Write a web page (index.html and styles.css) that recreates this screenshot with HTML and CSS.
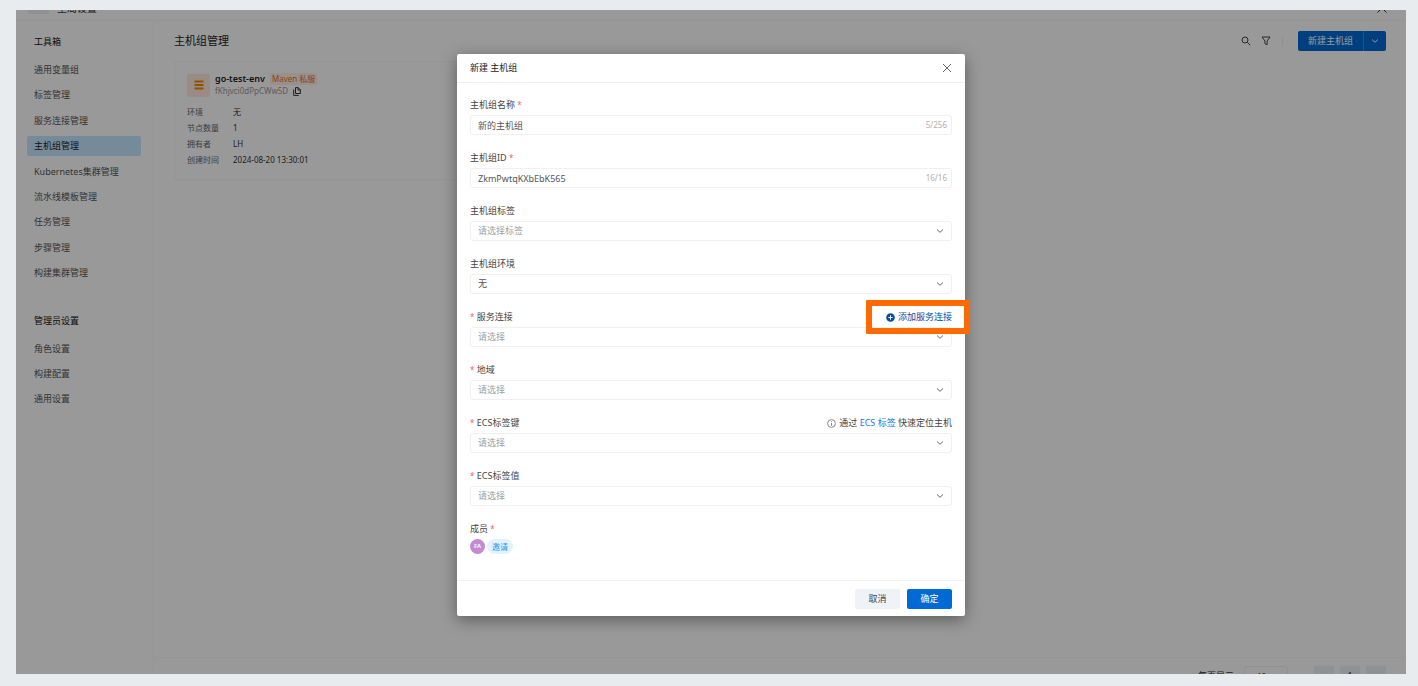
FILE: index.html
```html
<!DOCTYPE html>
<html lang="zh-CN">
<head>
<meta charset="utf-8">
<meta name="viewport" content="width=device-width, initial-scale=1">
<title>主机组管理</title>
<link rel="stylesheet" href="styles.css">
</head>
<body>
<div class="screen">
  <header class="topbar">
    <span class="brand-mark"></span>
    <span class="brand-name">全局设置</span>
    <button class="icon-btn topbar-close" aria-label="关闭设置"><svg width="12" height="12" viewBox="0 0 12 12"><path d="M1.5 1.5l9 9M10.5 1.5l-9 9"/></svg></button>
  </header>
  <div class="workspace">
    <nav class="sidebar">
      <h2 class="side-title">工具箱</h2>
      <ul class="side-list side-list-tools">
        <li><a href="#">通用变量组</a></li>
        <li><a href="#">标签管理</a></li>
        <li><a href="#">服务连接管理</a></li>
        <li><a href="#" class="active">主机组管理</a></li>
        <li><a href="#">Kubernetes集群管理</a></li>
        <li><a href="#">流水线模板管理</a></li>
        <li><a href="#">任务管理</a></li>
        <li><a href="#">步骤管理</a></li>
        <li><a href="#">构建集群管理</a></li>
      </ul>
      <h2 class="side-title side-title-admin">管理员设置</h2>
      <ul class="side-list">
        <li><a href="#">角色设置</a></li>
        <li><a href="#">构建配置</a></li>
        <li><a href="#">通用设置</a></li>
      </ul>
    </nav>
    <main class="main">
      <div class="page-head">
        <h1 class="page-title">主机组管理</h1>
        <div class="tools">
          <button class="icon-btn" aria-label="搜索"><svg width="10" height="10" viewBox="0 0 10 10"><circle cx="4" cy="4" r="3"/><path d="M6.3 6.3L9.3 9.3"/></svg></button>
          <button class="icon-btn" aria-label="筛选"><svg width="10" height="10" viewBox="0 0 10 10"><path d="M1 1h8L6.1 5v3.8L3.9 7.6V5z"/></svg></button>
          <span class="tools-divider"></span>
          <div class="split">
            <button class="split-main">新建主机组</button>
            <button class="split-more" aria-label="更多"><svg width="8" height="8" viewBox="0 0 8 8"><path d="M1 2.5L4 5.3 7 2.5"/></svg></button>
          </div>
        </div>
      </div>
      <div class="cards">
        <article class="card">
          <div class="card-head">
            <span class="card-icon"><svg width="10" height="10" viewBox="0 0 10 10"><path d="M.5 1.5h9M.5 5h9M.5 8.5h9"/></svg></span>
            <div class="card-names">
              <div class="card-line"><strong class="card-name">go-test-env</strong><span class="tag">Maven 私服</span></div>
              <div class="card-line"><span class="card-id">fKhjvci0dPpCWw5D</span><button class="icon-btn" aria-label="复制"><svg width="8" height="9" viewBox="0 0 8 9"><path d="M2.5.6h2.7L7.4 2.8v3.7H2.5zM5 .6V3h2.4M.7 2.5v5.9h5"/></svg></button></div>
            </div>
          </div>
          <dl class="facts">
            <dt>环境</dt><dd>无</dd>
            <dt>节点数量</dt><dd>1</dd>
            <dt>拥有者</dt><dd>LH</dd>
            <dt>创建时间</dt><dd>2024-08-20 13:30:01</dd>
          </dl>
        </article>
      </div>
      <footer class="pager">
        <label for="page-size">每页显示</label>
        <select id="page-size" class="pager-size"><option>10</option></select>
        <div class="pager-buttons">
          <button aria-label="上一页">‹</button>
          <button>1</button>
          <button aria-label="下一页">›</button>
        </div>
      </footer>
    </main>
  </div>

  <div class="overlay">
    <form class="dialog" role="dialog" aria-labelledby="dialog-title">
      <div class="dialog-head">
        <h2 id="dialog-title" class="dialog-title">新建 主机组</h2>
        <button type="button" class="icon-btn" aria-label="关闭"><svg width="10" height="10" viewBox="0 0 10 10"><path d="M1 1l8 8M9 1L1 9"/></svg></button>
      </div>
      <div class="dialog-body">
        <div class="field">
          <div class="field-head"><label for="name">主机组名称 <i class="req">*</i></label></div>
          <div class="control"><input id="name" type="text" value="新的主机组"><span class="count">5/256</span></div>
        </div>
        <div class="field">
          <div class="field-head"><label for="gid">主机组ID <i class="req">*</i></label></div>
          <div class="control"><input id="gid" type="text" value="ZkmPwtqKXbEbK565"><span class="count">16/16</span></div>
        </div>
        <div class="field">
          <div class="field-head"><label for="tags">主机组标签</label></div>
          <div class="control"><select id="tags" class="empty"><option>请选择标签</option></select><svg class="chev" width="8" height="8" viewBox="0 0 8 8"><path d="M1 2.5L4 5.3 7 2.5"/></svg></div>
        </div>
        <div class="field">
          <div class="field-head"><label for="env">主机组环境</label></div>
          <div class="control"><select id="env"><option>无</option></select><svg class="chev" width="8" height="8" viewBox="0 0 8 8"><path d="M1 2.5L4 5.3 7 2.5"/></svg></div>
        </div>
        <div class="field">
          <div class="field-head"><label for="conn"><i class="req">*</i> 服务连接</label>
            <a href="#" class="add-link"><svg width="9" height="9" viewBox="0 0 9 9"><circle cx="4.5" cy="4.5" r="4.3"/><path d="M2.4 4.5h4.2M4.5 2.4v4.2"/></svg>添加服务连接<span class="callout"></span></a>
          </div>
          <div class="control"><select id="conn" class="empty"><option>请选择</option></select><svg class="chev" width="8" height="8" viewBox="0 0 8 8"><path d="M1 2.5L4 5.3 7 2.5"/></svg></div>
        </div>
        <div class="field">
          <div class="field-head"><label for="region"><i class="req">*</i> 地域</label></div>
          <div class="control"><select id="region" class="empty"><option>请选择</option></select><svg class="chev" width="8" height="8" viewBox="0 0 8 8"><path d="M1 2.5L4 5.3 7 2.5"/></svg></div>
        </div>
        <div class="field">
          <div class="field-head"><label for="key"><i class="req">*</i> ECS标签键</label>
            <span class="hint"><svg width="9" height="9" viewBox="0 0 9 9"><circle cx="4.5" cy="4.5" r="3.9"/><path d="M4.5 4v2.8M4.5 2.2v.9"/></svg><span>通过 <a href="#">ECS 标签</a> 快速定位主机</span></span>
          </div>
          <div class="control"><select id="key" class="empty"><option>请选择</option></select><svg class="chev" width="8" height="8" viewBox="0 0 8 8"><path d="M1 2.5L4 5.3 7 2.5"/></svg></div>
        </div>
        <div class="field">
          <div class="field-head"><label for="val"><i class="req">*</i> ECS标签值</label></div>
          <div class="control"><select id="val" class="empty"><option>请选择</option></select><svg class="chev" width="8" height="8" viewBox="0 0 8 8"><path d="M1 2.5L4 5.3 7 2.5"/></svg></div>
        </div>
        <div class="field">
          <div class="field-head"><span>成员 <i class="req">*</i></span></div>
          <div class="members"><span class="avatar">FA</span><button type="button" class="invite">邀请</button></div>
        </div>
      </div>
      <div class="dialog-foot">
        <button type="button" class="btn">取消</button>
        <button type="submit" class="btn btn-primary">确定</button>
      </div>
    </form>
  </div>
</div>
</body>
</html>
```
FILE: styles.css
```css
* { box-sizing: border-box; }

body {
  margin: 0;
  min-height: 100vh;
  padding: 10px 12px 12px 16px;
  display: flex;
  background: #e8ecef;
  color: #333;
  font: 9px/16px "Noto Sans", "Noto Sans CJK SC", sans-serif;
}

h1, h2, ul, dl, dd { margin: 0; padding: 0; font-weight: 400; }
ul { list-style: none; }
a { text-decoration: none; color: inherit; }
button, input, select { font: inherit; color: inherit; border: 0; margin: 0; padding: 0; background: none; }
svg { display: block; fill: none; stroke: currentColor; stroke-width: 1; flex: none; }
.icon-btn { display: flex; }

.screen {
  position: relative;
  flex: 1;
  display: flex;
  flex-direction: column;
  background: #fff;
}

/* Top bar, scrolled mostly out of view */
.topbar {
  height: 11px;
  overflow: hidden;
  display: flex;
  align-items: flex-end;
  gap: 8px;
  padding: 0 18px 6px 12px;
  border-bottom: 1px solid #f8f8f8;
  font-size: 10px;
}
.brand-mark { width: 21px; height: 21px; border-radius: 3px; background: #eef2f6; }
.brand-name { line-height: 12px; }
.topbar-close { margin-left: auto; }

.workspace { flex: 1; display: flex; }

.sidebar {
  width: 138px;
  flex: none;
  padding: 13px 12px 13px 11px;
  border-right: 1px solid #f8f8f8;
}
.side-title { padding-left: 7px; font-size: 9px; color: #111; }
.side-title-admin { margin-top: 30px; }
.side-list {
  margin-top: 10px;
  display: flex;
  flex-direction: column;
  justify-content: space-between;
  gap: 5px;
}
.side-list-tools { min-height: 223px; }
.side-list a { display: block; padding: 0 7px; line-height: 20px; border-radius: 2px; color: #555; }
.side-list .active { background: #c5e8ff; color: #222; }

.main { flex: 1; display: flex; flex-direction: column; padding: 10px 20px 0; }
.page-head { display: flex; align-items: center; justify-content: space-between; }
.page-title { font-size: 11px; color: #222; }
.tools { display: flex; align-items: center; gap: 10px; color: #444; }
.tools-divider { width: 1px; height: 10px; margin-left: 1px; margin-right: 5px; background: #f0f0f0; }
.split { display: flex; height: 20px; border-radius: 2px; overflow: hidden; background: #006ad4; color: #fff; }
.split-main { padding: 0 10px; }
.split-more { width: 23px; display: flex; align-items: center; justify-content: center; border-left: 1px solid #3388dd; }

.cards { display: grid; grid-template-columns: repeat(3, 1fr); gap: 12px; margin-top: 10px; }
.card { padding: 11px 12px; border: 1px solid #f8f8f8; border-radius: 3px; }
.card-head { display: flex; gap: 5px; align-items: center; }
.card-icon { width: 23px; height: 23px; border-radius: 2px; background: #ffe9dc; color: #ed8a00; display: flex; align-items: center; justify-content: center; }
.card-icon svg { stroke-width: 2; }
.card-line { display: flex; align-items: center; gap: 5px; line-height: 12px; }
.card-name { font-weight: 600; color: #222; }
.tag { padding: 0 2px; border-radius: 2px; background: #fff0e4; color: #e8761a; font-size: 8px; }
.card-id { font-size: 8px; color: #999; }
.facts { margin-top: 7px; display: grid; grid-template-columns: 41px 1fr; column-gap: 5px; font-size: 8px; }
.facts dt { color: #666; }
.facts dd { color: #333; }

/* Pager, only its top edge stays in view */
.pager {
  height: 17px;
  overflow: hidden;
  margin: auto -20px 0;
  padding: 8px 20px 0;
  border-top: 1px solid #f8f8f8;
  display: flex;
  align-items: flex-start;
  justify-content: flex-end;
  gap: 10px;
  line-height: 20px;
}
.pager-size { width: 44px; height: 20px; padding: 0 12px; border: 1px solid #f0f0f0; border-radius: 3px; appearance: none; font-size: 8px; }
.pager-buttons { display: flex; gap: 6px; margin-left: 16px; }
.pager-buttons button { width: 20px; height: 20px; border-radius: 2px; background: #eff3f8; }

/* Dialog */
.overlay {
  position: absolute;
  inset: 0;
  padding-top: 44px;
  display: flex;
  justify-content: center;
  align-items: flex-start;
  background: rgba(0, 0, 0, .4);
}
.dialog {
  width: 508px;
  max-width: 100%;
  border-radius: 2px;
  background: #fff;
  color: #444;
  box-shadow: 0 4px 16px rgba(0, 0, 0, .4);
}
.dialog-head {
  display: flex;
  align-items: center;
  justify-content: space-between;
  padding: 6px 13px;
  border-bottom: 1px solid #eee;
}
.dialog-title { font-size: 9px; color: #222; }
.dialog-head .icon-btn { color: #666; }
.dialog-body { padding: 14px 13px 11px; }
.field { padding-bottom: 15px; }
.field-head { display: flex; justify-content: space-between; margin-bottom: 2px; }
.req { color: #f0645c; font-style: normal; font-size: 8px; }
.control { position: relative; }
.control input, .control select {
  display: block;
  width: 100%;
  height: 20px;
  padding: 0 40px 0 7px;
  border: 1px solid #f0f0f0;
  border-radius: 3px;
  appearance: none;
  color: #555;
}
.control .empty { color: #a0a0a0; }
.count { position: absolute; right: 5px; top: 2px; font-size: 8px; color: #b0b0b0; }
.chev { position: absolute; right: 8px; top: 6px; color: #666; }

.add-link { position: relative; display: flex; align-items: center; gap: 3px; color: #0050a8; }
.add-link svg circle { fill: #0050a8; stroke: none; }
.add-link svg path { stroke: #fff; }
.callout { position: absolute; z-index: 1; inset: -9px -18px -9px -20px; border: 6px solid #ff6a00; border-radius: 1px; }
.hint { display: flex; align-items: center; gap: 3px; }
.hint svg { color: #888; }
.hint a { color: #1677e0; }

.members { display: flex; gap: 2px; height: 15px; }
.avatar { width: 15px; border-radius: 8px; background: #c48ad2; color: #fff; font-size: 6px; font-weight: 600; line-height: 15px; text-align: center; }
.invite { padding: 0 5px; border-radius: 8px; background: #e2f2ff; color: #2a97ee; font-size: 8px; line-height: 15px; }

.dialog-foot {
  display: flex;
  justify-content: flex-end;
  gap: 7px;
  padding: 8px 13px 7px;
  border-top: 1px solid #f2f2f2;
}
.btn { width: 45px; height: 20px; border-radius: 2px; background: #eff3f7; }
.btn-primary { background: #006ad4; color: #fff; }
```
